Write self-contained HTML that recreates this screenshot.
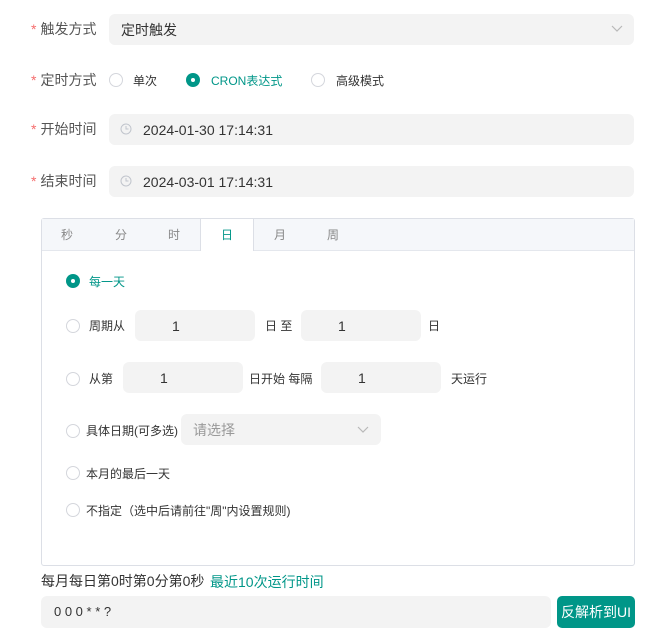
<!DOCTYPE html>
<html><head><meta charset="utf-8"><style>
*{margin:0;padding:0;box-sizing:border-box}
body{width:649px;height:641px;background:#fff;font-family:"Liberation Sans","Noto Sans CJK SC",sans-serif;color:#333;position:relative;overflow:hidden}
.a{position:absolute;white-space:nowrap}
.lbl{font-size:14px;color:#555;line-height:16px}
.lbl b{color:#f56c6c;font-weight:normal;margin-right:4px}
.box{position:absolute;background:#f3f3f3;border-radius:6px}
.t12{font-size:12px;line-height:14px;color:#333}
.t13{font-size:13px;line-height:15px;color:#333}
.t14{font-size:14px;line-height:16px;color:#333}
.r{position:absolute;width:14px;height:14px;border:1px solid #d4d6dc;border-radius:50%;background:#fff}
.r.on{border:none;background:#009688}
.r.on:after{content:"";position:absolute;left:5px;top:5px;width:4px;height:4px;border-radius:50%;background:#fff}
.g{color:#009688}
</style></head><body>
<div class="a lbl" style="left:31px;top:21px"><b>*</b>触发方式</div>
<div class="box" style="left:109px;top:14px;width:525px;height:31px"></div>
<div class="a t14" style="left:121px;top:22px">定时触发</div>
<svg class="a" style="left:611px;top:25px" width="12" height="8"><path d="M1 1l5 5 5-5" fill="none" stroke="#b8b8b8" stroke-width="1.2"/></svg>

<div class="a lbl" style="left:31px;top:72px"><b>*</b>定时方式</div>
<div class="r" style="left:109px;top:73px"></div><div class="a t12" style="left:133px;top:74px">单次</div>
<div class="r on" style="left:186px;top:73px"></div><div class="a t12 g" style="left:211px;top:74px">CRON表达式</div>
<div class="r" style="left:311px;top:73px"></div><div class="a t12" style="left:336px;top:74px">高级模式</div>

<div class="a lbl" style="left:31px;top:121px"><b>*</b>开始时间</div>
<div class="box" style="left:109px;top:114px;width:525px;height:31px"></div>
<svg class="a" style="left:120px;top:123px" width="12" height="12"><circle cx="6" cy="6" r="5" fill="none" stroke="#c0c4cc" stroke-width="1"/><path d="M6 3v3h2.5" fill="none" stroke="#c0c4cc"/></svg>
<div class="a t14" style="left:143px;top:122px">2024-01-30 17:14:31</div>

<div class="a lbl" style="left:31px;top:173px"><b>*</b>结束时间</div>
<div class="box" style="left:109px;top:166px;width:525px;height:31px"></div>
<svg class="a" style="left:120px;top:175px" width="12" height="12"><circle cx="6" cy="6" r="5" fill="none" stroke="#c0c4cc" stroke-width="1"/><path d="M6 3v3h2.5" fill="none" stroke="#c0c4cc"/></svg>
<div class="a t14" style="left:143px;top:174px">2024-03-01 17:14:31</div>

<div class="a" style="left:41px;top:218px;width:594px;height:348px;border:1px solid #dcdfe6;border-radius:3px"></div>
<div class="a" style="left:42px;top:219px;width:592px;height:32px;background:#f5f7fa;border-bottom:1px solid #e4e7ed"></div>
<div class="a" style="left:200px;top:219px;width:54px;height:32px;background:#fff;border-left:1px solid #dcdfe6;border-right:1px solid #dcdfe6"></div>
<div class="a t12" style="left:61px;top:228px;color:#888">秒</div>
<div class="a t12" style="left:115px;top:228px;color:#888">分</div>
<div class="a t12" style="left:168px;top:228px;color:#888">时</div>
<div class="a t12 g" style="left:221px;top:228px">日</div>
<div class="a t12" style="left:274px;top:228px;color:#888">月</div>
<div class="a t12" style="left:327px;top:228px;color:#888">周</div>

<div class="r on" style="left:66px;top:274px"></div><div class="a t12 g" style="left:89px;top:275px">每一天</div>

<div class="r" style="left:66px;top:319px"></div><div class="a t12" style="left:89px;top:319px">周期从</div>
<div class="box" style="left:135px;top:310px;width:120px;height:31px"></div><div class="a t14" style="left:172px;top:318px">1</div>
<div class="a t12" style="left:265px;top:319px">日 至</div>
<div class="box" style="left:301px;top:310px;width:120px;height:31px"></div><div class="a t14" style="left:338px;top:318px">1</div>
<div class="a t12" style="left:428px;top:319px">日</div>

<div class="r" style="left:66px;top:372px"></div><div class="a t12" style="left:89px;top:372px">从第</div>
<div class="box" style="left:123px;top:362px;width:120px;height:31px"></div><div class="a t14" style="left:160px;top:370px">1</div>
<div class="a t12" style="left:249px;top:372px">日开始 每隔</div>
<div class="box" style="left:321px;top:362px;width:120px;height:31px"></div><div class="a t14" style="left:358px;top:370px">1</div>
<div class="a t12" style="left:451px;top:372px">天运行</div>

<div class="r" style="left:66px;top:424px"></div><div class="a t12" style="left:86px;top:424px">具体日期(可多选)</div>
<div class="box" style="left:181px;top:414px;width:200px;height:31px"></div>
<div class="a t14" style="left:193px;top:422px;color:#999">请选择</div>
<svg class="a" style="left:357px;top:426px" width="12" height="8"><path d="M1 1l5 5 5-5" fill="none" stroke="#b8b8b8" stroke-width="1.2"/></svg>

<div class="r" style="left:66px;top:466px"></div><div class="a t12" style="left:86px;top:467px">本月的最后一天</div>
<div class="r" style="left:66px;top:503px"></div><div class="a t12" style="left:86px;top:504px">不指定（选中后请前往"周"内设置规则)</div>

<div class="a t14" style="left:41px;top:573px">每月每日第0时第0分第0秒</div>
<div class="a t14 g" style="left:210px;top:574px">最近10次运行时间</div>
<div class="box" style="left:41px;top:596px;width:510px;height:32px"></div>
<div class="a t13" style="left:54px;top:604px">0 0 0 * * ?</div>
<div class="a" style="left:557px;top:596px;width:78px;height:32px;background:#009688;border-radius:5px;color:#fff;font-size:14px;line-height:32px;text-align:center">反解析到UI</div>
</body></html>
